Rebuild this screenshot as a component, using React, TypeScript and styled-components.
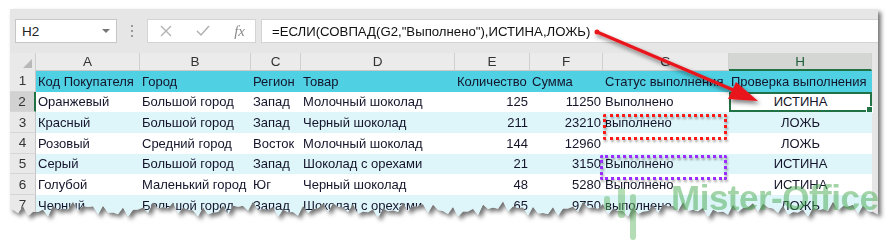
import React from "react";
import styled, { createGlobalStyle } from "styled-components";

const GlobalStyle = createGlobalStyle`
  html, body { margin: 0; padding: 0; background: #fff; }
  body { font-family: "Liberation Sans", Arial, sans-serif; overflow: hidden; }
`;

type Col = { key: string; width: number; align: "left" | "right" | "center" };

const columns: Col[] = [
    { key: "A", width: 104, align: "left" },
    { key: "B", width: 111, align: "left" },
    { key: "C", width: 50, align: "left" },
    { key: "D", width: 154, align: "left" },
    { key: "E", width: 75, align: "right" },
    { key: "F", width: 73, align: "right" },
    { key: "G", width: 126, align: "left" },
    { key: "H", width: 143, align: "center" },
];

const headers = [
    "Код Покупателя",
    "Город",
    "Регион",
    "Товар",
    "Количество",
    "Сумма",
    "Статус выполнения",
    "Проверка выполнения",
];

const rows = [
    ["Оранжевый", "Большой город", "Запад", "Молочный шоколад", "125", "11250", "Выполнено", "ИСТИНА"],
    ["Красный", "Большой город", "Запад", "Черный шоколад", "211", "23210", "выполнено", "ЛОЖЬ"],
    ["Розовый", "Средний город", "Восток", "Молочный шоколад", "144", "12960", "", "ЛОЖЬ"],
    ["Серый", "Большой город", "Запад", "Шоколад с орехами", "21", "3150", "Выполнено", "ИСТИНА"],
    ["Голубой", "Маленький город", "Юг", "Черный шоколад", "48", "5280", "Выполнено", "ИСТИНА"],
    ["Черный", "Большой город", "Запад", "Шоколад с орехами", "65", "9750", "выполнено", "ЛОЖЬ"],
];

// torn paper edge along the bottom of the sheet
function tornEdge(width: number, base: number) {
    const pts: string[] = ["0px 0px", `${width}px 0px`];
    let i = 0;
    for (let x = width; x >= 0; x -= 5) {
        const wobble = Math.sin(i * 1.9) * 3 + Math.sin(i * 0.37 + 2) * 3 + (i % 2 ? -3 : 2);
        pts.push(`${x}px ${(base + wobble).toFixed(1)}px`);
        i++;
    }
    pts.push(`0px ${base}px`);
    return `polygon(${pts.join(",")})`;
}

const Page = styled.div`
    position: relative;
    width: 889px;
    height: 240px;
    padding: 9px 0 0 10px;
    box-sizing: border-box;
`;

const ShadowWrap = styled.div`
    width: 868px;
    filter: drop-shadow(3px 3px 2px rgba(0, 0, 0, 0.55));
`;

const Panel = styled.div`
    background: #e6e6e6;
    height: 215px;
    clip-path: ${tornEdge(868, 201)};
`;

const Toolbar = styled.div`
    display: flex;
    align-items: center;
    height: 44px;
    padding: 0 0 0 5px;
`;

const NameBox = styled.div`
    display: flex;
    align-items: center;
    justify-content: space-between;
    width: 102px;
    height: 24px;
    background: #fff;
    border: 1px solid #c6c6c6;
    padding: 0 6px;
    box-sizing: border-box;
    font-size: 13.5px;
    color: #222;
`;

const Caret = styled.span`
    width: 0;
    height: 0;
    border-left: 4px solid transparent;
    border-right: 4px solid transparent;
    border-top: 4px solid #777;
`;

const Grip = styled.div`
    display: flex;
    flex-direction: column;
    gap: 3px;
    margin: 0 14px;
    & > span {
        width: 2px;
        height: 2px;
        background: #9a9a9a;
    }
`;

const IconBox = styled.div`
    display: flex;
    align-items: center;
    justify-content: space-between;
    width: 109px;
    height: 24px;
    background: #fff;
    border: 1px solid #d4d4d4;
    box-sizing: border-box;
    padding: 0 10px 0 12px;
`;

const Fx = styled.span`
    font-family: "Liberation Serif", serif;
    font-style: italic;
    font-size: 15px;
    color: #8a8a8a;
`;

const FormulaInput = styled.div`
    flex: 1;
    height: 24px;
    margin-left: 5px;
    background: #fff;
    border: 1px solid #d4d4d4;
    border-right: none;
    box-sizing: border-box;
    padding-left: 10px;
    display: flex;
    align-items: center;
    font-size: 13.2px;
    color: #111;
`;

const Grid = styled.div`
    display: grid;
    grid-template-columns: 26px ${columns.map((c) => `${c.width}px`).join(" ")};
    grid-template-rows: 18px repeat(7, 20.67px);
    width: 862px;
`;

const Corner = styled.div`
    position: relative;
    background: #e9e9e9;
    border-right: 1px solid #cfcfcf;
    &::after {
        content: "";
        position: absolute;
        right: 3px;
        bottom: 3px;
        border-left: 9px solid transparent;
        border-bottom: 9px solid #b8b8b8;
    }
`;

const ColHead = styled.div<{ $active?: boolean }>`
    display: flex;
    align-items: center;
    justify-content: center;
    font-size: 13.5px;
    background: ${(p) => (p.$active ? "#d3d6d3" : "#ebebeb")};
    color: ${(p) => (p.$active ? "#1f5f3b" : "#333")};
    border-right: 1px solid #d0d0d0;
    border-bottom: ${(p) => (p.$active ? "2px solid #217346" : "1px solid #c8c8c8")};
    box-sizing: border-box;
`;

const RowHead = styled.div<{ $active?: boolean }>`
    display: flex;
    align-items: center;
    justify-content: center;
    font-size: 13.5px;
    color: #333;
    background: ${(p) => (p.$active ? "#d2d2d2" : "#e9e9e9")};
    border-bottom: 1px solid #d6d6d6;
    border-right: ${(p) => (p.$active ? "2px solid #217346" : "1px solid #c6c6c6")};
    box-sizing: border-box;
`;

const Cell = styled.div<{ $bg: string; $align: string }>`
    position: relative;
    display: flex;
    align-items: center;
    justify-content: ${(p) => (p.$align === "right" ? "flex-end" : p.$align === "center" ? "center" : "flex-start")};
    padding: 0 2px;
    background: ${(p) => p.$bg};
    font-size: 13px;
    color: #14142b;
    white-space: nowrap;
    overflow: hidden;
    box-sizing: border-box;
`;

const SelectedCell = styled(Cell)`
    overflow: visible;
`;

const Selection = styled.div`
    position: absolute;
    inset: 0;
    border: 2px solid #217346;
    pointer-events: none;
    &::after {
        content: "";
        position: absolute;
        right: -3px;
        bottom: -3px;
        width: 5px;
        height: 5px;
        background: #217346;
        border: 1px solid #fff;
    }
`;

const Overlay = styled.svg`
    position: absolute;
    left: 0;
    top: 0;
    pointer-events: none;
`;

const DottedBox = styled.div<{ $color: string; $x: number; $y: number; $w: number; $h: number }>`
    position: absolute;
    left: ${(p) => p.$x}px;
    top: ${(p) => p.$y}px;
    width: ${(p) => p.$w}px;
    height: ${(p) => p.$h}px;
    border: 3px dotted ${(p) => p.$color};
    border-radius: 2px;
    box-sizing: border-box;
    filter: drop-shadow(1px 2px 1px rgba(0, 0, 0, 0.35));
`;

const Watermark = styled.div`
    position: absolute;
    left: 671px;
    top: 178px;
    font-family: "Liberation Sans", Arial, sans-serif;
    font-weight: bold;
    font-size: 35px;
    letter-spacing: -0.5px;
    color: rgba(70, 170, 80, 0.5);
    white-space: nowrap;
    pointer-events: none;
`;

const rowBg = (i: number) => (i === 0 ? "#4fd1e3" : i % 2 === 1 ? "#ffffff" : "#def5fa");

export default function App() {
    return (
        <Page>
            <GlobalStyle />
            <ShadowWrap>
                <Panel>
                    <Toolbar>
                        <NameBox>
                            H2
                            <Caret />
                        </NameBox>
                        <Grip>
                            <span />
                            <span />
                            <span />
                        </Grip>
                        <IconBox>
                            <svg width="12" height="12" viewBox="0 0 12 12">
                                <path d="M1 1 L11 11 M11 1 L1 11" stroke="#b0b0b0" strokeWidth="1.3" />
                            </svg>
                            <svg width="14" height="12" viewBox="0 0 14 12">
                                <path d="M1 6 L5 10 L13 1" stroke="#b0b0b0" strokeWidth="1.5" fill="none" />
                            </svg>
                            <Fx>fx</Fx>
                        </IconBox>
                        <FormulaInput>=ЕСЛИ(СОВПАД(G2,"Выполнено"),ИСТИНА,ЛОЖЬ)</FormulaInput>
                    </Toolbar>
                    <Grid>
                        <Corner />
                        {columns.map((c) => (
                            <ColHead key={c.key} $active={c.key === "H"}>
                                {c.key}
                            </ColHead>
                        ))}
                        {[headers, ...rows].map((row, r) => (
                            <React.Fragment key={r}>
                                <RowHead $active={r === 1}>{r + 1}</RowHead>
                                {row.map((v, c) => {
                                    const align = r === 0 ? "left" : columns[c].align;
                                    if (r === 1 && c === 7) {
                                        return (
                                            <SelectedCell key={c} $bg={rowBg(r)} $align={align}>
                                                {v}
                                                <Selection />
                                            </SelectedCell>
                                        );
                                    }
                                    return (
                                        <Cell key={c} $bg={rowBg(r)} $align={align}>
                                            {v}
                                        </Cell>
                                    );
                                })}
                            </React.Fragment>
                        ))}
                    </Grid>
                </Panel>
            </ShadowWrap>

            <DottedBox $color="#ff1a1a" $x={603} $y={114} $w={124} $h={26} />
            <DottedBox $color="#9b2cff" $x={600} $y={155} $w={127} $h={25} />

            <Watermark>Mister-Office</Watermark>

            <Overlay width="889" height="240" viewBox="0 0 889 240">
                <defs>
                    <filter id="arrowShadow" x="-10%" y="-30%" width="130%" height="180%">
                        <feDropShadow dx="2" dy="3" stdDeviation="2" floodColor="#000" floodOpacity="0.5" />
                    </filter>
                </defs>
                <g filter="url(#arrowShadow)" fill="#e8151b" stroke="#e8151b">
                    <circle cx="597" cy="32" r="2.5" stroke="none" />
                    <line x1="597" y1="32" x2="738" y2="92" strokeWidth="3.5" />
                    <polygon points="758,101 728,99 736,82" stroke="none" />
                </g>
                <g fill="rgba(90,180,90,0.45)">
                    <rect x="604" y="196" width="6" height="14" rx="3" />
                    <rect x="618" y="188" width="7" height="30" rx="3" />
                    <rect x="630" y="194" width="6" height="46" rx="3" />
                </g>
            </Overlay>
        </Page>
    );
}
